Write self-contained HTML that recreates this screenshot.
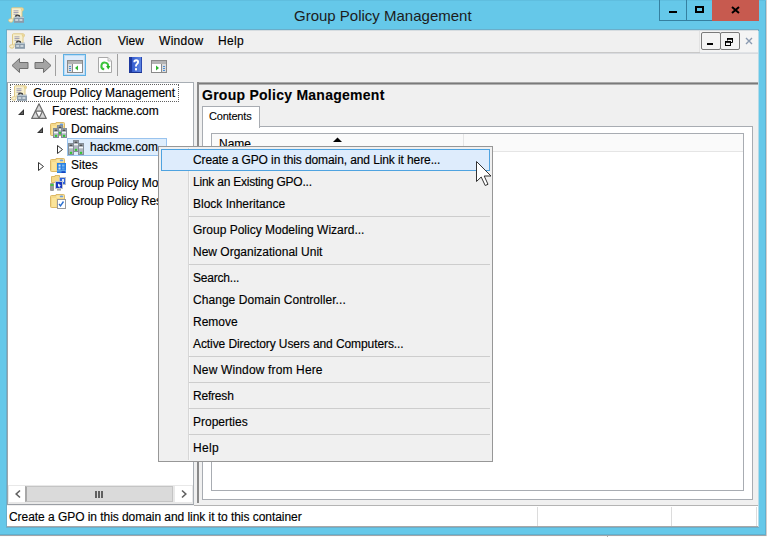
<!DOCTYPE html>
<html><head><meta charset="utf-8">
<style>
*{margin:0;padding:0;box-sizing:border-box}
html,body{width:767px;height:537px;overflow:hidden;background:#fbfbfb}
body{position:relative;font-family:"Liberation Sans",sans-serif;font-size:12px;color:#000}
.a{position:absolute}
.t{position:absolute;white-space:nowrap;line-height:14px;-webkit-text-stroke:0.15px currentColor}
svg{position:absolute;overflow:visible}
</style></head><body>
<!-- window frame -->
<div class="a" style="left:0;top:0;width:766px;height:536px;background:#a0a6aa"></div>
<div class="a" style="left:0;top:0;width:766px;height:535px;background:#5fb0cf"></div>
<div class="a" style="left:0;top:0;width:765px;height:534px;background:#65c8e9"></div>
<div class="a" style="left:0;top:0;width:766px;height:1px;background:#5fbedf"></div>
<div class="a" style="left:766px;top:0;width:1px;height:536px;background:#d4cecc"></div>
<!-- title icon -->
<svg style="left:8px;top:7px" width="16" height="16" viewBox="0 0 16 16"><path d="M3.5 1.5Q3.5 0.8 4.5 0.8H14Q15.5 0.8 15.5 2.5Q15.5 3.8 14 4.2V11H5V13.5Q5 15.2 3 15.2Q0.6 15.2 0.6 13.3Q0.6 11.8 2.5 11.8H3.5Z" fill="#f6efcf" stroke="#dcc47e" stroke-width="0.9"/>
<path d="M12.5 1Q14.8 1 14.8 2.6Q14.8 3.8 13.3 4" fill="#e8d28c"/>
<rect x="5.5" y="3.4" width="5" height="0.9" fill="#9c9ab4"/><rect x="5.5" y="5.1" width="5" height="0.9" fill="#9c9ab4"/><rect x="5.5" y="6.8" width="4" height="0.9" fill="#9c9ab4"/>
<path d="M7 10Q7 7.6 9.6 7.6Q12.2 7.6 12.2 10Z" fill="#3a3a3a"/><path d="M8.4 10Q8.4 8.8 9.6 8.8Q10.8 8.8 10.8 10Z" fill="#c8ccd0"/>
<rect x="6" y="9.8" width="10" height="6" fill="#8b9baa"/><rect x="6" y="9.8" width="10" height="1.2" fill="#b8c6d0"/><rect x="7.2" y="12" width="3" height="2" fill="#c9d3da"/><rect x="11.4" y="12" width="3" height="2" fill="#c9d3da"/></svg>
<div class="t" style="left:294px;top:7px;font-size:15px;line-height:17px;color:#1c1c1c;-webkit-text-stroke:0">Group Policy Management</div>
<div class="a" style="left:659px;top:0;width:28px;height:21px;border:1px solid #3580a0;border-top:0"></div>
<div class="a" style="left:686px;top:0;width:27px;height:21px;border-bottom:1px solid #3580a0"></div>
<div class="a" style="left:669px;top:11px;width:8px;height:2px;background:#000"></div>
<div class="a" style="left:695px;top:6px;width:9px;height:7px;border:2px solid #000"></div>
<div class="a" style="left:712px;top:0;width:47px;height:21px;background:#c75a4f"></div>
<svg style="left:731px;top:6px" width="9" height="8"><path d="M1 1L8 7M8 1L1 7" stroke="#000" stroke-width="2"/></svg>

<!-- client -->
<div class="a" style="left:6px;top:29px;width:753px;height:499px;background:#6aaeca"></div>
<div class="a" style="left:7px;top:30px;width:751px;height:497px;background:#f0f0f0;border-top:1px solid #d6dce0"></div>
<div class="a" style="left:758px;top:31px;width:1px;height:496px;background:#b4dbe9"></div>
<!-- menu bar -->
<div class="a" style="left:7px;top:52px;width:693px;height:1px;background:#c8c8c8"></div>
<div class="a" style="left:700px;top:52px;width:58px;height:1px;background:#e0e3e6"></div>
<div class="a" style="left:700px;top:31px;width:58px;height:21px;background:#f4f4f4"></div>
<div class="a" style="left:7px;top:53px;width:751px;height:1px;background:#d9dbdf"></div>
<svg style="left:9px;top:33px" width="16" height="16" viewBox="0 0 16 16"><path d="M3.5 1.5Q3.5 0.8 4.5 0.8H14Q15.5 0.8 15.5 2.5Q15.5 3.8 14 4.2V11H5V13.5Q5 15.2 3 15.2Q0.6 15.2 0.6 13.3Q0.6 11.8 2.5 11.8H3.5Z" fill="#f6efcf" stroke="#dcc47e" stroke-width="0.9"/>
<path d="M12.5 1Q14.8 1 14.8 2.6Q14.8 3.8 13.3 4" fill="#e8d28c"/>
<rect x="5.5" y="3.4" width="5" height="0.9" fill="#9c9ab4"/><rect x="5.5" y="5.1" width="5" height="0.9" fill="#9c9ab4"/><rect x="5.5" y="6.8" width="4" height="0.9" fill="#9c9ab4"/>
<path d="M7 10Q7 7.6 9.6 7.6Q12.2 7.6 12.2 10Z" fill="#3a3a3a"/><path d="M8.4 10Q8.4 8.8 9.6 8.8Q10.8 8.8 10.8 10Z" fill="#c8ccd0"/>
<rect x="6" y="9.8" width="10" height="6" fill="#8b9baa"/><rect x="6" y="9.8" width="10" height="1.2" fill="#b8c6d0"/><rect x="7.2" y="12" width="3" height="2" fill="#c9d3da"/><rect x="11.4" y="12" width="3" height="2" fill="#c9d3da"/></svg>
<div class="t" style="left:33px;top:34px">File</div>
<div class="t" style="left:67px;top:34px;letter-spacing:0.25px">Action</div>
<div class="t" style="left:118px;top:34px">View</div>
<div class="t" style="left:159px;top:34px;letter-spacing:0.3px">Window</div>
<div class="t" style="left:218px;top:34px;letter-spacing:0.3px">Help</div>
<div class="a" style="left:699px;top:31px;width:1px;height:21px;background:#e2e2e2"></div>
<div class="a" style="left:701px;top:32px;width:20px;height:18px;border:1px solid #7a7a7a;border-radius:2px;background:#f4f4f4"></div>
<div class="a" style="left:720px;top:32px;width:20px;height:18px;border:1px solid #7a7a7a;border-radius:2px;background:#f4f4f4"></div>
<div class="a" style="left:707px;top:43px;width:6px;height:2px;background:#000"></div>

<svg style="left:725px;top:38px" width="8" height="8" viewBox="0 0 8 8"><path d="M2.5 2.5V0.5H7.5V4.5H6" fill="none" stroke="#000" stroke-width="1"/><rect x="2" y="0" width="6" height="1.8" fill="#000"/><rect x="0.5" y="3.5" width="5" height="4" fill="#f4f4f4" stroke="#000"/><rect x="0" y="3" width="6" height="1.8" fill="#000"/></svg>
<svg style="left:745px;top:37px" width="8" height="8"><path d="M1 1L7 7M7 1L1 7" stroke="#8a9ab0" stroke-width="1.4"/></svg>

<svg style="left:11px;top:58px" width="18" height="15" viewBox="0 0 18 15"><path d="M1 7.5L8.5 0.5V4.5H17V10.5H8.5V14.5Z" fill="#a4a4a4" stroke="#6f6f6f" stroke-width="1" stroke-linejoin="round"/></svg>
<svg style="left:34px;top:58px" width="18" height="15" viewBox="0 0 18 15"><path d="M17 7.5L9.5 0.5V4.5H1V10.5H9.5V14.5Z" fill="#a4a4a4" stroke="#6f6f6f" stroke-width="1" stroke-linejoin="round"/></svg>
<div class="a" style="left:55px;top:55px;width:1px;height:21px;background:#a0a0a0"></div>
<div class="a" style="left:63px;top:54px;width:23px;height:22px;border:1px solid #5eb0e5;background:#deecfc;box-shadow:inset 0 0 0 1px #bcdcf4"></div>
<svg style="left:67px;top:60px" width="16" height="13" viewBox="0 0 16 13">
<rect x="0.5" y="0.5" width="15" height="12" fill="#fff" stroke="#8a8a8a"/><rect x="1" y="1" width="14" height="3" fill="#b4b4b4"/>
<rect x="1" y="4" width="4" height="8" fill="#dcdcdc"/><rect x="5" y="4" width="1" height="8" fill="#8a8a8a"/><rect x="2" y="6" width="2" height="1" fill="#4a90d9"/><rect x="2" y="8" width="2" height="1" fill="#4a90d9"/><rect x="2" y="10" width="2" height="1" fill="#4a90d9"/>
<path d="M8 8L11 5.5V10.5Z" fill="#2db52d"/></svg>
<svg style="left:98px;top:57px" width="14" height="16" viewBox="0 0 14 16"><path d="M0.5 0.5H10L13.5 4V15.5H0.5Z" fill="#fdfdfd" stroke="#a8a8a8"/><path d="M10 0.5V4H13.5" fill="#e6e6e6" stroke="#b8b8b8"/><path d="M6.2 12.35A3.4 3.4 0 1 1 10.15 9.3" fill="none" stroke="#3cc43c" stroke-width="2"/><path d="M8.1 9.1H12.4L10.25 12.5Z" fill="#22b422"/></svg>
<div class="a" style="left:117px;top:54px;width:1px;height:22px;background:#a0a0a0"></div>
<svg style="left:129px;top:57px" width="13" height="16" viewBox="0 0 13 16"><defs><linearGradient id="hb" x1="0" x2="1"><stop offset="0" stop-color="#2a50c8"/><stop offset="1" stop-color="#6088e4"/></linearGradient></defs><rect x="0" y="0" width="13" height="16" fill="url(#hb)"/><rect x="0" y="0" width="3" height="16" fill="#1e3aa0"/><rect x="12" y="0" width="1" height="16" fill="#2a48b0"/><rect x="0" y="15" width="13" height="1" fill="#1c3490"/><path d="M5.3 5.2Q5.3 3.3 7.2 3.3Q9.1 3.3 9.1 5.1Q9.1 6.2 8 7Q7 7.7 7 9V9.6" fill="none" stroke="#fff" stroke-width="1.9"/><rect x="6" y="11.2" width="2" height="2.2" fill="#fff"/></svg>
<svg style="left:151px;top:60px" width="16" height="13" viewBox="0 0 16 13">
<rect x="0.5" y="0.5" width="15" height="12" fill="#fff" stroke="#8a8a8a"/><rect x="1" y="1" width="14" height="3" fill="#b4b4b4"/>
<rect x="11" y="4" width="4" height="8" fill="#dcdcdc"/><rect x="10" y="4" width="1" height="8" fill="#8a8a8a"/><rect x="12" y="6" width="2" height="1" fill="#4a90d9"/><rect x="12" y="8" width="2" height="1" fill="#4a90d9"/><rect x="12" y="10" width="2" height="1" fill="#4a90d9"/>
<path d="M5 5.5V10.5L8 8Z" fill="#2db52d"/></svg>


<div class="a" style="left:7px;top:82px;width:187px;height:423px;background:#fff;border:1px solid #a8aeb4;border-left-color:#9aa4aa;border-bottom-color:#9a9ea4"></div>
<div class="a" style="left:10px;top:84px;width:169px;height:18px;border:1px dotted #606060"></div>
<div class="a" style="left:67px;top:138px;width:100px;height:18px;background:#deedfc;border:1px solid #99c3ee"></div>
<svg style="left:11px;top:85px" width="16" height="16" viewBox="0 0 16 16"><path d="M3.5 1.5Q3.5 0.8 4.5 0.8H14Q15.5 0.8 15.5 2.5Q15.5 3.8 14 4.2V11H5V13.5Q5 15.2 3 15.2Q0.6 15.2 0.6 13.3Q0.6 11.8 2.5 11.8H3.5Z" fill="#f6efcf" stroke="#dcc47e" stroke-width="0.9"/>
<path d="M12.5 1Q14.8 1 14.8 2.6Q14.8 3.8 13.3 4" fill="#e8d28c"/>
<rect x="5.5" y="3.4" width="5" height="0.9" fill="#9c9ab4"/><rect x="5.5" y="5.1" width="5" height="0.9" fill="#9c9ab4"/><rect x="5.5" y="6.8" width="4" height="0.9" fill="#9c9ab4"/>
<path d="M7 10Q7 7.6 9.6 7.6Q12.2 7.6 12.2 10Z" fill="#3a3a3a"/><path d="M8.4 10Q8.4 8.8 9.6 8.8Q10.8 8.8 10.8 10Z" fill="#c8ccd0"/>
<rect x="6" y="9.8" width="10" height="6" fill="#8b9baa"/><rect x="6" y="9.8" width="10" height="1.2" fill="#b8c6d0"/><rect x="7.2" y="12" width="3" height="2" fill="#c9d3da"/><rect x="11.4" y="12" width="3" height="2" fill="#c9d3da"/></svg>
<svg style="left:18px;top:109px" width="6" height="6" viewBox="0 0 6 6"><path d="M0 6L6 0V6Z" fill="#333"/><path d="M2.5 5L5 2.5V5Z" fill="#666"/></svg>
<svg style="left:31px;top:103px" width="16" height="16" viewBox="0 0 16 16"><path d="M8 0.8L15.3 15.4H0.7Z" fill="#d8d8d8" stroke="#6a6a6a" stroke-width="1.2" stroke-linejoin="round"/><path d="M4.4 8.1H11.6L8 15.2Z" fill="#fbfbfb" stroke="#6a6a6a" stroke-width="1.2" stroke-linejoin="round"/></svg>
<svg style="left:37px;top:127px" width="6" height="6" viewBox="0 0 6 6"><path d="M0 6L6 0V6Z" fill="#333"/><path d="M2.5 5L5 2.5V5Z" fill="#666"/></svg>
<svg style="left:50px;top:122px" width="15" height="14" viewBox="0 0 15 14"><path d="M0.5 2.5Q0.5 1.5 1.5 1.5H6V0.5H13.5Q14.5 0.5 14.5 1.5V12.5Q14.5 13.5 13.5 13.5H1.5Q0.5 13.5 0.5 12.5Z" fill="#f5d98a" stroke="#dcb866"/><path d="M6.5 1.5H14V4H6.5Z" fill="#f9e6a8"/><ellipse cx="11.5" cy="2.4" rx="1.8" ry="0.9" fill="#6a9ee0"/><rect x="2" y="4" width="4" height="9" fill="#fbe49a"/></svg>
<svg style="left:57px;top:125px" width="6" height="10" viewBox="0 0 6 10"><rect x="0.5" y="0.5" width="5" height="9" fill="#aeb6be" stroke="#848e98"/><rect x="1.5" y="1.6" width="3" height="1.2" fill="#3a3a3a"/><rect x="1" y="4" width="4" height="1.3" fill="#f4f6f8"/><rect x="1.8" y="6.8" width="2.4" height="2.2" rx="1" fill="#30c830"/></svg>
<svg style="left:53px;top:128px" width="6" height="10" viewBox="0 0 6 10"><rect x="0.5" y="0.5" width="5" height="9" fill="#aeb6be" stroke="#848e98"/><rect x="1.5" y="1.6" width="3" height="1.2" fill="#3a3a3a"/><rect x="1" y="4" width="4" height="1.3" fill="#f4f6f8"/><rect x="1.8" y="6.8" width="2.4" height="2.2" rx="1" fill="#30c830"/></svg>
<svg style="left:61px;top:128px" width="6" height="10" viewBox="0 0 6 10"><rect x="0.5" y="0.5" width="5" height="9" fill="#aeb6be" stroke="#848e98"/><rect x="1.5" y="1.6" width="3" height="1.2" fill="#3a3a3a"/><rect x="1" y="4" width="4" height="1.3" fill="#f4f6f8"/><rect x="1.8" y="6.8" width="2.4" height="2.2" rx="1" fill="#30c830"/></svg>
<svg style="left:57px;top:145px" width="6" height="9" viewBox="0 0 6 9"><path d="M0.5 0.5L5.5 4.5L0.5 8.5Z" fill="#fff" stroke="#333"/></svg>
<svg style="left:73px;top:140px" width="6" height="12" viewBox="0 0 6 12"><rect x="0.5" y="0.5" width="5" height="11" fill="#aeb6be" stroke="#848e98"/><rect x="1.5" y="1.6" width="3" height="1.2" fill="#3a3a3a"/><rect x="1" y="4" width="4" height="1.3" fill="#f4f6f8"/><rect x="1.8" y="8.8" width="2.4" height="2.2" rx="1" fill="#30c830"/></svg>
<svg style="left:68px;top:143px" width="6" height="12" viewBox="0 0 6 12"><rect x="0.5" y="0.5" width="5" height="11" fill="#aeb6be" stroke="#848e98"/><rect x="1.5" y="1.6" width="3" height="1.2" fill="#3a3a3a"/><rect x="1" y="4" width="4" height="1.3" fill="#f4f6f8"/><rect x="1.8" y="8.8" width="2.4" height="2.2" rx="1" fill="#30c830"/></svg>
<svg style="left:78px;top:143px" width="6" height="12" viewBox="0 0 6 12"><rect x="0.5" y="0.5" width="5" height="11" fill="#aeb6be" stroke="#848e98"/><rect x="1.5" y="1.6" width="3" height="1.2" fill="#3a3a3a"/><rect x="1" y="4" width="4" height="1.3" fill="#f4f6f8"/><rect x="1.8" y="8.8" width="2.4" height="2.2" rx="1" fill="#30c830"/></svg>
<svg style="left:38px;top:162px" width="6" height="9" viewBox="0 0 6 9"><path d="M0.5 0.5L5.5 4.5L0.5 8.5Z" fill="#fff" stroke="#333"/></svg>
<svg style="left:50px;top:158px" width="15" height="14" viewBox="0 0 15 14"><path d="M0.5 2.5Q0.5 1.5 1.5 1.5H6V0.5H13.5Q14.5 0.5 14.5 1.5V12.5Q14.5 13.5 13.5 13.5H1.5Q0.5 13.5 0.5 12.5Z" fill="#f5d98a" stroke="#dcb866"/><path d="M6.5 1.5H14V4H6.5Z" fill="#f9e6a8"/><ellipse cx="11.5" cy="2.4" rx="1.8" ry="0.9" fill="#6a9ee0"/><rect x="2" y="4" width="4" height="9" fill="#fbe49a"/></svg>
<svg style="left:57px;top:163px" width="9" height="10" viewBox="0 0 9 10"><rect width="9" height="10" fill="#2a80e0"/><rect x="1.5" y="1.5" width="2" height="2" fill="#cfe6fb"/><rect x="5" y="1.5" width="2.5" height="2" fill="#7ab8f0"/><rect x="1.5" y="4.5" width="2" height="2" fill="#cfe6fb"/><rect x="5" y="4.5" width="2.5" height="2" fill="#5aa2ea"/><rect x="0" y="7.5" width="9" height="0.8" fill="#8cc4f4"/><rect x="4.5" y="8.3" width="3.5" height="1.7" fill="#1840c0"/></svg>
<svg style="left:51px;top:175px" width="9" height="8" viewBox="0 0 9 8"><path d="M0.5 1.5H4V0.5H8.5V7.5H0.5Z" fill="#f5d98a" stroke="#dcb866"/></svg>
<svg style="left:55px;top:177px" width="11" height="14" viewBox="0 0 11 14"><rect x="4.5" y="0.5" width="6" height="7" fill="#2f62d8" stroke="#b8bec8" stroke-width="1"/><rect x="7" y="2" width="2" height="3" fill="#dfe8f6"/><rect x="0.5" y="4.5" width="7" height="7" fill="#1838c0" stroke="#c0c6d0" stroke-width="1"/><path d="M3 6.5L6 8.5L4.5 9L5.5 10.5H4.5L3.8 9.3L3 10Z" fill="#f4f6fa"/><rect x="2" y="12" width="4" height="1.6" fill="#a8a8a8"/></svg>
<svg style="left:50px;top:183px" width="4" height="8" viewBox="0 0 4 8"><rect width="4" height="8" rx="1" fill="#9a9a9a"/><rect x="0.5" y="1" width="3" height="2" fill="#44c544"/></svg>
<svg style="left:50px;top:194px" width="15" height="14" viewBox="0 0 15 14"><path d="M0.5 2.5Q0.5 1.5 1.5 1.5H6V0.5H13.5Q14.5 0.5 14.5 1.5V12.5Q14.5 13.5 13.5 13.5H1.5Q0.5 13.5 0.5 12.5Z" fill="#f5d98a" stroke="#dcb866"/><path d="M6.5 1.5H14V4H6.5Z" fill="#f9e6a8"/><ellipse cx="11.5" cy="2.4" rx="1.8" ry="0.9" fill="#6a9ee0"/><rect x="2" y="4" width="4" height="9" fill="#fbe49a"/></svg>
<svg style="left:57px;top:199px" width="9" height="10" viewBox="0 0 9 10"><rect x="0.5" y="0.5" width="8" height="9" fill="#fff" stroke="#9a9a9a"/><path d="M2 5L3.5 6.8L6.5 2.5" fill="none" stroke="#2a6fd0" stroke-width="1.4"/></svg>
<div class="t" style="left:33px;top:86px">Group Policy Management</div>
<div class="t" style="left:52px;top:104px;letter-spacing:-0.12px">Forest: hackme.com</div>
<div class="t" style="left:71px;top:122px">Domains</div>
<div class="t" style="left:90px;top:140px">hackme.com</div>
<div class="t" style="left:71px;top:158px">Sites</div>
<div class="t" style="left:71px;top:176px;letter-spacing:-0.1px">Group Policy Modeling</div>
<div class="t" style="left:71px;top:194px;letter-spacing:-0.15px">Group Policy Results</div>
<!-- scrollbar -->
<div class="a" style="left:8px;top:485px;width:185px;height:19px;background:#e8e8e8"></div>
<div class="a" style="left:9px;top:486px;width:16px;height:16px;background:#fff"></div>
<div class="a" style="left:25px;top:486px;width:148px;height:16px;background:#dadada;border:1px solid #c4c4c4;border-left:2px solid #a8a8a8"></div>
<div class="a" style="left:175px;top:486px;width:17px;height:16px;background:#fff"></div>
<svg style="left:15px;top:490px" width="6" height="8" viewBox="0 0 6 8"><path d="M5 0.5L1.2 4L5 7.5" fill="none" stroke="#606060" stroke-width="1.6"/></svg>
<svg style="left:181px;top:490px" width="6" height="8" viewBox="0 0 6 8"><path d="M1 0.5L4.8 4L1 7.5" fill="none" stroke="#606060" stroke-width="1.6"/></svg>
<div class="a" style="left:95px;top:491px;width:2px;height:7px;background:#606060"></div>
<div class="a" style="left:98px;top:491px;width:2px;height:7px;background:#606060"></div>
<div class="a" style="left:101px;top:491px;width:2px;height:7px;background:#606060"></div>


<div class="a" style="left:197px;top:82px;width:561px;height:1px;background:#a8a8a8"></div>
<div class="a" style="left:197px;top:83px;width:561px;height:1px;background:#7a7a7a"></div>
<div class="a" style="left:197px;top:84px;width:561px;height:1px;background:#b0b0b0"></div>
<div class="a" style="left:197px;top:82px;width:2px;height:421px;background:#8a8a8a"></div>
<div class="t" style="left:202px;top:87px;font-weight:bold;font-size:14px;line-height:16px;letter-spacing:0.26px;-webkit-text-stroke:0.1px #000">Group Policy Management</div>
<div class="a" style="left:202px;top:126px;width:551px;height:374px;background:#fff;border:1px solid #a8acb2"></div>
<div class="a" style="left:202px;top:106px;width:58px;height:22px;background:#fff;border:1px solid #a8acb2;border-bottom:0"></div>
<div class="t" style="left:209px;top:110px;font-size:11px;line-height:13px;letter-spacing:-0.2px;-webkit-text-stroke:0.1px #000">Contents</div>
<div class="a" style="left:211px;top:133px;width:533px;height:358px;background:#fff;border:1px solid #a8acb2"></div>
<div class="a" style="left:212px;top:134px;width:531px;height:18px;background:#fafafa;border-bottom:1px solid #e5e5e5"></div>
<div class="t" style="left:219px;top:137px">Name</div>
<svg style="left:333px;top:137px" width="9" height="5" viewBox="0 0 9 5"><path d="M0 5L4.5 0.5L9 5Z" fill="#000"/></svg>
<div class="a" style="left:463px;top:134px;width:1px;height:17px;background:#e5e5e5"></div>


<div class="a" style="left:194px;top:505px;width:564px;height:1px;background:#b4b4b4"></div>
<div class="a" style="left:7px;top:506px;width:751px;height:21px;background:#fff;border-bottom:1px solid #a8a8a8"></div>
<div class="t" style="left:9px;top:510px;letter-spacing:-0.05px">Create a GPO in this domain and link it to this container</div>
<div class="a" style="left:537px;top:507px;width:1px;height:19px;background:#dcdcdc"></div>
<div class="a" style="left:671px;top:507px;width:1px;height:19px;background:#dcdcdc"></div>
<div class="a" style="left:756px;top:507px;width:1px;height:19px;background:#dcdcdc"></div>


<div class="a" style="left:158px;top:146px;width:335px;height:316px;background:#f0f0f0;border:1px solid #979797"></div>
<div class="a" style="left:188px;top:148px;width:1px;height:312px;background:#d7d7d7"></div>
<div class="a" style="left:189px;top:148px;width:1px;height:312px;background:#f8f8f8"></div>
<div class="a" style="left:161px;top:149px;width:329px;height:22px;background:#deecfc;border:1px solid #4fa3e0"></div>
<div class="t" style="left:193px;top:153px;letter-spacing:-0.1px">Create a GPO in this domain, and Link it here...</div>
<div class="t" style="left:193px;top:175px;letter-spacing:-0.23px">Link an Existing GPO...</div>
<div class="t" style="left:193px;top:197px">Block Inheritance</div>
<div class="a" style="left:189px;top:216px;width:301px;height:1px;background:#cdcdcd"></div>
<div class="t" style="left:193px;top:223px">Group Policy Modeling Wizard...</div>
<div class="t" style="left:193px;top:245px">New Organizational Unit</div>
<div class="a" style="left:189px;top:264px;width:301px;height:1px;background:#cdcdcd"></div>
<div class="t" style="left:193px;top:271px;letter-spacing:-0.2px">Search...</div>
<div class="t" style="left:193px;top:293px;letter-spacing:0.05px">Change Domain Controller...</div>
<div class="t" style="left:193px;top:315px">Remove</div>
<div class="t" style="left:193px;top:337px;letter-spacing:-0.09px">Active Directory Users and Computers...</div>
<div class="a" style="left:189px;top:356px;width:301px;height:1px;background:#cdcdcd"></div>
<div class="t" style="left:193px;top:363px;letter-spacing:0.15px">New Window from Here</div>
<div class="a" style="left:189px;top:382px;width:301px;height:1px;background:#cdcdcd"></div>
<div class="t" style="left:193px;top:389px;letter-spacing:-0.2px">Refresh</div>
<div class="a" style="left:189px;top:408px;width:301px;height:1px;background:#cdcdcd"></div>
<div class="t" style="left:193px;top:415px">Properties</div>
<div class="a" style="left:189px;top:434px;width:301px;height:1px;background:#cdcdcd"></div>
<div class="t" style="left:193px;top:441px;letter-spacing:0.3px">Help</div>

<svg style="left:476px;top:161px" width="17" height="27" viewBox="0 0 17 27"><path d="M0.5 0.5V20.5L5.2 16L9.2 24.5L12 23.3L8.2 15H15Z" fill="#fff" stroke="#333" stroke-width="1" stroke-linejoin="miter"/></svg>
<div class="a" style="left:607px;top:536px;width:1px;height:1px;background:#b0b0b0"></div>
</body></html>
